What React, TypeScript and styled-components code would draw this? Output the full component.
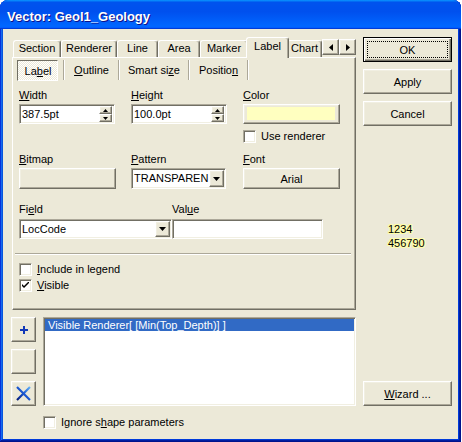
import React from "react";
import styled, { createGlobalStyle, css } from "styled-components";

const face = "#ECE9D8";
const light = "#F1EFE2";
const shadow = "#ACA899";
const dark = "#716F64";

const GlobalStyle = createGlobalStyle`
  html, body { margin: 0; padding: 0; background: #fff; }
  body {
    font-family: "Liberation Sans", Arial, sans-serif;
    font-size: 11px;
    color: #000;
  }
  u { text-decoration: underline; text-underline-offset: 1px; }
`;

const raised = css`
  border: 1px solid;
  border-color: #fff ${dark} ${dark} #fff;
  box-shadow: inset -1px -1px 0 ${shadow}, inset 1px 1px 0 ${light};
`;

const sunken = css`
  border: 1px solid;
  border-color: ${shadow} #fff #fff ${shadow};
  box-shadow: inset 1px 1px 0 ${dark}, inset -1px -1px 0 ${light};
`;

const Window = styled.div`
  width: 461px;
  height: 442px;
  box-sizing: border-box;
  display: flex;
  flex-direction: column;
  background: #0855dd;
  border-radius: 8px 8px 0 0;
  overflow: hidden;
  box-shadow: inset -1px -1px #00138c, inset 1px 1px #0831d9,
    inset -2px -2px #001ea0, inset 2px 2px #166aee, inset -3px -3px #003bda,
    inset 3px 3px #0855dd;
`;

const TitleBar = styled.div`
  height: 29px;
  box-sizing: border-box;
  padding: 9px 0 0 7px;
  background: linear-gradient(
    180deg,
    #0997ff,
    #0053ee 8%,
    #0050ee 40%,
    #06f 88%,
    #06f 93%,
    #005bff 95%,
    #003dd7 96%,
    #003dd7
  );
  color: #fff;
  font: bold 13px/15px "Liberation Sans", Arial, sans-serif;
  text-shadow: 1px 1px #0f1089;
`;

const Client = styled.div`
  flex: 1;
  margin: 0 3px 3px;
  background: ${face};
  display: flex;
  gap: 7px;
  padding-left: 8px;
`;

const Main = styled.div`
  width: 345px;
  padding-top: 8px;
  display: flex;
  flex-direction: column;
`;

const Side = styled.div`
  width: 89px;
  padding: 8px 0 33px;
  display: flex;
  flex-direction: column;
  gap: 7px;
`;

/* ---- outer tab strip ---- */

const TabStrip = styled.div`
  display: flex;
  height: 21px;
  margin: 0 0 -1px 2px;
  position: relative;
  z-index: 1;
`;

const TabViewport = styled.div`
  width: 309px;
  display: flex;
  align-items: flex-end;
  overflow: hidden;
`;

const Tab = styled.div<{ $w: number; $active?: boolean }>`
  flex: none;
  box-sizing: border-box;
  width: ${(p) => p.$w}px;
  height: ${(p) => (p.$active ? 21 : 17)}px;
  margin: ${(p) => (p.$active ? "0 -2px" : "0 0 1px")};
  padding-top: ${(p) => (p.$active ? 2 : 1)}px;
  position: relative;
  z-index: ${(p) => (p.$active ? 1 : 0)};
  background: ${face};
  border: 1px solid;
  border-color: #fff ${dark} transparent #fff;
  border-bottom: none;
  border-radius: 3px 3px 0 0;
  box-shadow: inset -1px 0 0 ${shadow};
  text-align: center;
  line-height: 13px;
  white-space: nowrap;
`;

const ArrowGroup = styled.div`
  display: flex;
  margin-top: 2px;
  height: 16px;
`;

const ArrowButton = styled.div`
  ${raised};
  box-sizing: border-box;
  width: 17px;
  height: 16px;
  display: flex;
  align-items: center;
  justify-content: center;
  background: ${face};
`;

const Panel = styled.div`
  box-sizing: border-box;
  width: 344px;
  height: 253px;
  margin-left: 1px;
  padding: 2px 0 0 4px;
  border: 1px solid;
  border-color: #fff ${dark} ${dark} #fff;
  box-shadow: inset -1px -1px 0 ${shadow};
  display: flex;
  flex-direction: column;
`;

/* ---- inner button tabs ---- */

const InnerTabs = styled.div`
  display: flex;
  height: 21px;
`;

const ToolTab = styled.div<{ $w: number; $pressed?: boolean; $gap?: number }>`
  box-sizing: border-box;
  width: ${(p) => p.$w}px;
  margin-right: ${(p) => p.$gap ?? 0}px;
  text-align: center;
  line-height: 13px;
  padding-top: 4px;
  padding-left: ${(p) => (p.$pressed ? 1 : 0)}px;
  white-space: nowrap;
  ${(p) =>
    p.$pressed &&
    css`
      border: 1px solid;
      border-color: ${dark} #fff #fff ${dark};
      background: repeating-conic-gradient(#fff 0 25%, ${face} 0 50%) 0 0 / 2px 2px;
    `}
`;

const ToolSep = styled.div`
  width: 0;
  height: 20px;
  border-left: 1px solid ${shadow};
  border-right: 1px solid #fff;
`;

/* ---- form ---- */

const FormGrid = styled.div`
  margin: 8px 0 0 2px;
  display: grid;
  grid-template-columns: repeat(3, 112px);
  row-gap: 10px;
  align-items: start;
`;

const Field = styled.div<{ $w?: number; $gap?: number }>`
  display: flex;
  flex-direction: column;
  gap: ${(p) => p.$gap ?? 2}px;
  ${(p) => p.$w && `width: ${p.$w}px;`}
`;

const FieldLabel = styled.div`
  line-height: 13px;
  height: 13px;
  white-space: nowrap;
`;

const FieldRow = styled.div`
  display: flex;
  margin: 14px 0 0 2px;
`;

const TextBox = styled.div<{ $w: number; $h?: number }>`
  ${sunken};
  box-sizing: border-box;
  width: ${(p) => p.$w}px;
  height: ${(p) => p.$h ?? 20}px;
  padding: 1px;
  background: #fff;
  display: flex;
  align-items: stretch;
`;

const BoxText = styled.div`
  flex: 1;
  padding-left: 1px;
  line-height: 16px;
  white-space: nowrap;
  overflow: hidden;
`;

const Spinner = styled.div`
  width: 13px;
  display: flex;
  flex-direction: column;
  margin-right: 1px;
`;

const SpinHalf = styled.div`
  ${raised};
  flex: 1;
  box-sizing: border-box;
  background: ${face};
  display: flex;
  align-items: center;
  justify-content: center;
`;

const DropButton = styled.div`
  ${raised};
  box-sizing: border-box;
  width: 15px;
  background: ${face};
  display: flex;
  align-items: center;
  justify-content: center;
`;

const Button = styled.div<{ $w?: number; $h?: number }>`
  ${raised};
  box-sizing: border-box;
  width: ${(p) => (p.$w ? `${p.$w}px` : "100%")};
  height: ${(p) => p.$h ?? 25}px;
  background: ${face};
  display: flex;
  align-items: center;
  justify-content: center;
  white-space: nowrap;
  flex: none;
`;

const DefaultButton = styled.div`
  position: relative;
  box-sizing: border-box;
  height: 25px;
  border: 1px solid #000;
  background: ${face};
  box-shadow: inset 1px 1px 0 #fff, inset -1px -1px 0 ${dark},
    inset -2px -2px 0 ${shadow};
  display: flex;
  align-items: center;
  justify-content: center;

  &::after {
    content: "";
    position: absolute;
    inset: 3px;
    border: 1px dotted #000;
  }
`;

const ColorButton = styled.div`
  ${raised};
  box-sizing: border-box;
  width: 97px;
  height: 20px;
  padding: 2px 4px 3px 3px;
  background: ${face};
  display: flex;
`;

const Swatch = styled.div`
  flex: 1;
  background: #ffffc0;
`;

const CheckRow = styled.div<{ $top?: number; $left?: number }>`
  display: flex;
  align-items: center;
  gap: 5px;
  height: 13px;
  line-height: 13px;
  margin-top: ${(p) => p.$top ?? 0}px;
  margin-left: ${(p) => p.$left ?? 0}px;
  white-space: nowrap;
`;

const CheckBox = styled.div`
  ${sunken};
  box-sizing: border-box;
  width: 13px;
  height: 13px;
  flex: none;
  background: #fff;
  display: flex;
  align-items: center;
  justify-content: center;
`;

const Rule = styled.div`
  height: 0;
  border-top: 1px solid ${shadow};
  border-bottom: 1px solid #fff;
  margin: 14px 4px 0 -2px;
`;

const Checks = styled.div`
  display: flex;
  flex-direction: column;
  gap: 3px;
  margin: 8px 0 0 2px;
`;

/* ---- renderer list ---- */

const RuleArea = styled.div`
  display: flex;
  gap: 7px;
  height: 89px;
  margin-top: 7px;
`;

const ToolColumn = styled.div`
  display: flex;
  flex-direction: column;
  gap: 7px;
`;

const ListBox = styled.div`
  ${sunken};
  flex: 1;
  box-sizing: border-box;
  padding: 1px;
  background: #fff;
`;

const ListItem = styled.div<{ $selected?: boolean }>`
  height: 12px;
  line-height: 12px;
  padding-left: 3px;
  white-space: nowrap;
  ${(p) =>
    p.$selected &&
    css`
      background: #316ac5;
      color: #fff;
    `}
`;

const Preview = styled.div`
  margin-top: 89px;
  padding-left: 25px;
  line-height: 14px;
  text-shadow: 1px 0 #ffffa8, -1px 0 #ffffa8, 0 1px #ffffa8, 0 -1px #ffffa8,
    1px 1px #ffffa8, -1px -1px #ffffa8, 1px -1px #ffffa8, -1px 1px #ffffa8;
`;

const Wizard = styled(Button)`
  margin-top: auto;
`;

/* ---- small drawings ---- */

const DownArrow = () => (
  <svg width="7" height="4" viewBox="0 0 7 4">
    <polygon points="0,0 7,0 3.5,4" fill="#000" />
  </svg>
);

const SpinArrow = ({ up }: { up?: boolean }) => (
  <svg width="5" height="3" viewBox="0 0 5 3">
    <polygon points={up ? "0,3 5,3 2.5,0" : "0,0 5,0 2.5,3"} fill="#000" />
  </svg>
);

const SideArrow = ({ left }: { left?: boolean }) => (
  <svg width="4" height="7" viewBox="0 0 4 7">
    <polygon points={left ? "4,0 4,7 0,3.5" : "0,0 0,7 4,3.5"} fill="#000" />
  </svg>
);

const Check = () => (
  <svg width="7" height="7" viewBox="0 0 7 7">
    <path d="M0 2 L2 4 L7 -1 L7 1 L2 6 L0 4 Z" fill="#000" />
  </svg>
);

const PlusIcon = () => (
  <svg width="8" height="8" viewBox="0 0 8 8">
    <rect x="0" y="3" width="8" height="2" fill="#1238b8" />
    <rect x="3" y="0" width="2" height="8" fill="#1238b8" />
  </svg>
);

const DeleteIcon = () => (
  <svg width="15" height="15" viewBox="0 0 15 15">
    <defs>
      <linearGradient id="xg" x1="0" y1="1" x2="1" y2="0">
        <stop offset="0" stopColor="#061c78" />
        <stop offset="0.5" stopColor="#1a56d0" />
        <stop offset="1" stopColor="#60b0f8" />
      </linearGradient>
    </defs>
    <path d="M1 1 L14 14 M14 1 L1 14" stroke="url(#xg)" strokeWidth="2.2" fill="none" />
  </svg>
);

const tabs: [string, number][] = [
  ["Section", 48],
  ["Renderer", 56],
  ["Line", 41],
  ["Area", 42],
  ["Marker", 48],
];

export default function App() {
  return (
    <>
      <GlobalStyle />
      <Window>
        <TitleBar>Vector: Geol1_Geology</TitleBar>
        <Client>
          <Main>
            <TabStrip>
              <TabViewport>
                {tabs.map(([t, w]) => (
                  <Tab key={t} $w={w}>
                    {t}
                  </Tab>
                ))}
                <Tab $w={43} $active>
                  Label
                </Tab>
                <Tab $w={35}>Chart</Tab>
              </TabViewport>
              <ArrowGroup>
                <ArrowButton>
                  <SideArrow left />
                </ArrowButton>
                <ArrowButton>
                  <SideArrow />
                </ArrowButton>
              </ArrowGroup>
            </TabStrip>

            <Panel>
              <InnerTabs>
                <ToolTab $w={41} $gap={5} $pressed>
                  La<u>b</u>el
                </ToolTab>
                <ToolSep />
                <ToolTab $w={53}>
                  <u>O</u>utline
                </ToolTab>
                <ToolSep />
                <ToolTab $w={68}>
                  Smart si<u>z</u>e
                </ToolTab>
                <ToolSep />
                <ToolTab $w={57}>
                  Positio<u>n</u>
                </ToolTab>
                <ToolSep />
              </InnerTabs>

              <FormGrid>
                <Field>
                  <FieldLabel>
                    <u>W</u>idth
                  </FieldLabel>
                  <TextBox $w={96}>
                    <BoxText>387.5pt</BoxText>
                    <Spinner>
                      <SpinHalf>
                        <SpinArrow up />
                      </SpinHalf>
                      <SpinHalf>
                        <SpinArrow />
                      </SpinHalf>
                    </Spinner>
                  </TextBox>
                </Field>
                <Field>
                  <FieldLabel>
                    <u>H</u>eight
                  </FieldLabel>
                  <TextBox $w={96}>
                    <BoxText>100.0pt</BoxText>
                    <Spinner>
                      <SpinHalf>
                        <SpinArrow up />
                      </SpinHalf>
                      <SpinHalf>
                        <SpinArrow />
                      </SpinHalf>
                    </Spinner>
                  </TextBox>
                </Field>
                <Field>
                  <FieldLabel>
                    <u>C</u>olor
                  </FieldLabel>
                  <ColorButton>
                    <Swatch />
                  </ColorButton>
                  <CheckRow $top={4}>
                    <CheckBox />
                    Use renderer
                  </CheckRow>
                </Field>

                <Field>
                  <FieldLabel>
                    <u>B</u>itmap
                  </FieldLabel>
                  <Button $w={97} $h={21} />
                </Field>
                <Field>
                  <FieldLabel>
                    <u>P</u>attern
                  </FieldLabel>
                  <TextBox $w={95} $h={21}>
                    <BoxText>TRANSPAREN</BoxText>
                    <DropButton>
                      <DownArrow />
                    </DropButton>
                  </TextBox>
                </Field>
                <Field>
                  <FieldLabel>
                    <u>F</u>ont
                  </FieldLabel>
                  <Button $w={97} $h={21}>
                    Arial
                  </Button>
                </Field>
              </FormGrid>

              <FieldRow>
                <Field $w={153} $gap={3}>
                  <FieldLabel>
                    Fi<u>e</u>ld
                  </FieldLabel>
                  <TextBox $w={153}>
                    <BoxText>LocCode</BoxText>
                    <DropButton>
                      <DownArrow />
                    </DropButton>
                  </TextBox>
                </Field>
                <Field $w={151} $gap={3}>
                  <FieldLabel>
                    Val<u>u</u>e
                  </FieldLabel>
                  <TextBox $w={151} />
                </Field>
              </FieldRow>

              <Rule />

              <Checks>
                <CheckRow>
                  <CheckBox />
                  <span>
                    <u>I</u>nclude in legend
                  </span>
                </CheckRow>
                <CheckRow>
                  <CheckBox>
                    <Check />
                  </CheckBox>
                  <span>
                    <u>V</u>isible
                  </span>
                </CheckRow>
              </Checks>
            </Panel>

            <RuleArea>
              <ToolColumn>
                <Button $w={25}>
                  <PlusIcon />
                </Button>
                <Button $w={25} />
                <Button $w={25}>
                  <DeleteIcon />
                </Button>
              </ToolColumn>
              <ListBox>
                <ListItem $selected>Visible Renderer[ [Min(Top_Depth)] ]</ListItem>
              </ListBox>
            </RuleArea>

            <CheckRow $top={10} $left={32}>
              <CheckBox />
              <span>
                Ignore s<u>h</u>ape parameters
              </span>
            </CheckRow>
          </Main>

          <Side>
            <DefaultButton>OK</DefaultButton>
            <Button>Apply</Button>
            <Button>Cancel</Button>
            <Preview>
              1234
              <br />
              456790
            </Preview>
            <Wizard>
              <span>
                <u>W</u>izard ...
              </span>
            </Wizard>
          </Side>
        </Client>
      </Window>
    </>
  );
}
